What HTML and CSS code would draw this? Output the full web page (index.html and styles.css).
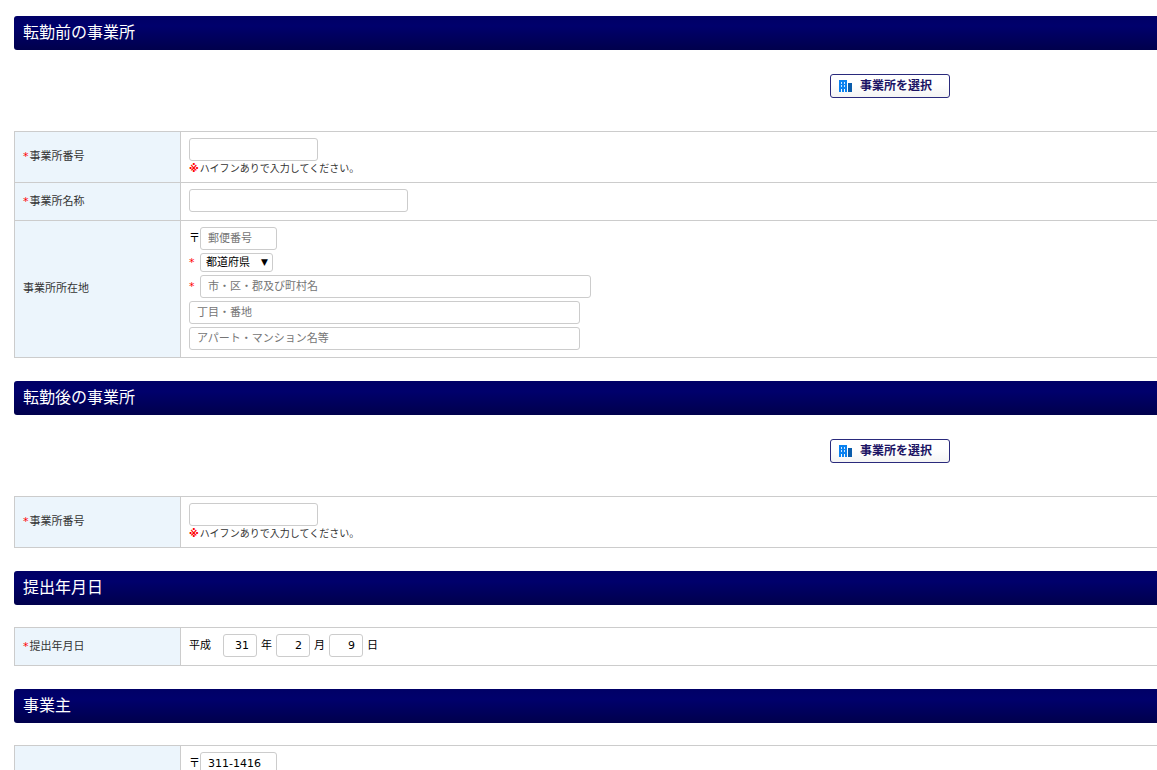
FILE: index.html
```html
<!DOCTYPE html>
<html lang="ja">
<head>
<meta charset="utf-8">
<title>転勤届</title>
<link rel="stylesheet" href="styles.css">
</head>
<body>
<form class="wrap">
	<section>
		<h2>転勤前の事業所</h2>
		<div class="btn_area">
			<button type="button" class="btn_select"><svg class="ico" width="13" height="12" viewBox="0 0 13 12"><path fill="#0a82f0" d="M0 0h8v12H6V9H5v3H3V9H2v3H0z"/><path fill="#cfe6ff" d="M2 2h1v2H2zM5 2h1v2H5zM2 5h1v2H2zM5 5h1v2H5z"/><path fill="#0a5cab" d="M9 3h4v9H9z"/></svg>事業所を選択</button>
		</div>
		<table>
			<tr>
				<th><label for="before_no"><em>*</em>事業所番号</label></th>
				<td>
					<input type="text" id="before_no" class="w_no">
					<p class="note"><b>※</b>ハイフンありで入力してください。</p>
				</td>
			</tr>
			<tr>
				<th><label for="before_name"><em>*</em>事業所名称</label></th>
				<td><input type="text" id="before_name" class="w_name"></td>
			</tr>
			<tr>
				<th>事業所所在地</th>
				<td>
					<div class="addr">
						<div class="line"><label class="mark" for="before_zip">〒</label><input type="text" id="before_zip" class="w_zip" placeholder="郵便番号"></div>
						<div class="line"><label class="mark" for="before_pref"><em>*</em></label><span class="sel"><select id="before_pref"><option>都道府県</option></select><i>▼</i></span></div>
						<div class="line"><label class="mark" for="before_city"><em>*</em></label><input type="text" id="before_city" class="w_addr" placeholder="市・区・郡及び町村名"></div>
						<div class="line"><input type="text" class="w_addr" placeholder="丁目・番地" aria-label="丁目・番地"></div>
						<div class="line"><input type="text" class="w_addr" placeholder="アパート・マンション名等" aria-label="アパート・マンション名等"></div>
					</div>
				</td>
			</tr>
		</table>
	</section>

	<section>
		<h2>転勤後の事業所</h2>
		<div class="btn_area">
			<button type="button" class="btn_select"><svg class="ico" width="13" height="12" viewBox="0 0 13 12"><path fill="#0a82f0" d="M0 0h8v12H6V9H5v3H3V9H2v3H0z"/><path fill="#cfe6ff" d="M2 2h1v2H2zM5 2h1v2H5zM2 5h1v2H2zM5 5h1v2H5z"/><path fill="#0a5cab" d="M9 3h4v9H9z"/></svg>事業所を選択</button>
		</div>
		<table>
			<tr>
				<th><label for="after_no"><em>*</em>事業所番号</label></th>
				<td>
					<input type="text" id="after_no" class="w_no">
					<p class="note"><b>※</b>ハイフンありで入力してください。</p>
				</td>
			</tr>
		</table>
	</section>

	<section>
		<h2 class="mb">提出年月日</h2>
		<table>
			<tr>
				<th><em>*</em>提出年月日</th>
				<td>
					<div class="date">
						<span class="era">平成</span>
						<input type="text" id="year" class="w_date" value="31"><label for="year">年</label>
						<input type="text" id="month" class="w_date" value="2"><label for="month">月</label>
						<input type="text" id="day" class="w_date" value="9"><label for="day">日</label>
					</div>
				</td>
			</tr>
		</table>
	</section>

	<section>
		<h2 class="mb">事業主</h2>
		<table>
			<tr>
				<th></th>
				<td>
					<div class="line"><label class="mark" for="owner_zip">〒</label><input type="text" id="owner_zip" class="w_zip" value="311-1416"></div>
				</td>
			</tr>
		</table>
	</section>
</form>
</body>
</html>
```

FILE: styles.css
```css
*{margin:0;padding:0;box-sizing:border-box;}
body{background:#fff;color:#000;font:11px/14px "DejaVu Sans","Noto Sans CJK JP",sans-serif;}
em,i{font-style:normal;}
em,.note b{color:#f00;}
input,select,button{font:inherit;color:inherit;}

.wrap{padding:16px 0 0 14px;}
section{margin-bottom:23px;}
h2{padding:0 9px;border-radius:3px 0 0 3px;background:linear-gradient(#006,#00006c 30%,#00004c);color:#fff;font-size:16px;font-weight:normal;line-height:34px;}
.mb{margin-bottom:22px;}

.btn_area{display:flex;justify-content:flex-end;padding:24px 207px 33px 0;}
.btn_select{display:flex;align-items:center;gap:8px;width:120px;height:24px;padding:0 8px;border:1px solid #2a2a7c;border-radius:3px;background:linear-gradient(#fff 40%,#f4f4f4);color:#1c1464;font-size:12px;font-weight:bold;white-space:nowrap;cursor:pointer;}
.ico{flex:none;}

table{width:100%;border-collapse:collapse;}
tr{height:38px;}
th,td{border:1px solid #ccc;border-right:none;text-align:left;}
th{width:166px;padding:0 8px;background:#ecf5fc;color:#333;font-weight:normal;}
th em{margin-right:1px;}
td{padding:6px 8px 7px;vertical-align:top;}

input{display:block;height:23px;padding:0 7px;border:1px solid #ccc;border-radius:3px;background:#fff;}
input::placeholder{color:#757575;}
.w_no{width:129px;}
.w_name{width:219px;}
.w_zip{width:77px;}
.w_addr{width:391px;}
.w_date{width:34px;text-align:right;}

.note{padding-top:2px;color:#333;font-size:10px;line-height:12px;}
.note b{margin-right:1px;}

.addr{display:flex;flex-direction:column;gap:3px;}
.line{display:flex;align-items:center;}
.mark{width:11px;white-space:nowrap;}
.sel{position:relative;}
.sel select{display:block;width:73px;height:19px;padding:0 5px;border:1px solid #ccc;border-radius:3px;background:#fff;appearance:none;}
.sel i{position:absolute;top:2px;right:5px;font-size:9px;pointer-events:none;}

.date{display:flex;align-items:center;gap:4px;}
.era{margin-right:8px;}
```
